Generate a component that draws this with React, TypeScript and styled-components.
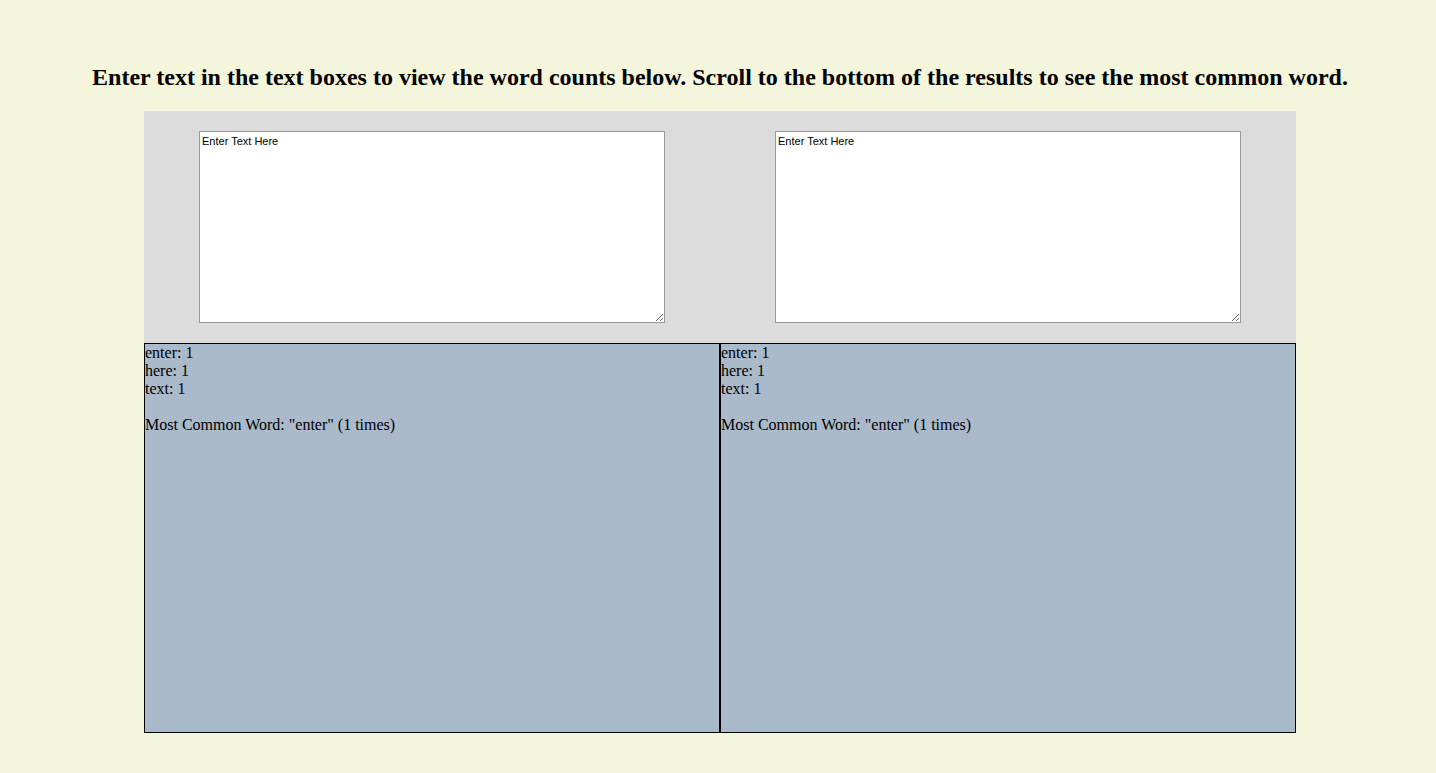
import React, { useState } from "react";
import styled, { createGlobalStyle } from "styled-components";

const Global = createGlobalStyle`
  html, body { margin: 0; padding: 0; background: #f5f5dc; }
  body { font-family: "Liberation Serif", "Times New Roman", serif; color: #000; }
`;

const Page = styled.div`
  padding-top: 63px;
  min-height: 773px;
  box-sizing: border-box;
`;

const Heading = styled.h2`
  margin: 0 0 20px 4px;
  text-align: center;
  font-size: 24px;
  font-weight: bold;
  line-height: 28px;
`;

const Panel = styled.div`
  width: 1152px;
  margin-left: 144px;
`;

const InputRow = styled.div`
  display: grid;
  grid-template-columns: 1fr 1fr;
  background: #dcdcdc;
  padding: 20px 0;
`;

const Cell = styled.div`
  display: flex;
  justify-content: center;
`;

const TextBox = styled.textarea`
  width: 466px;
  height: 192px;
  box-sizing: border-box;
  border: 1px solid #999;
  padding: 3px 2px 2px;
  margin: 0;
  font-family: "Liberation Sans", Arial, sans-serif;
  font-size: 11px;
  line-height: 13px;
  color: #000;
  background: #fff;
  outline: none;
  display: block;
`;

const ResultRow = styled.div`
  display: grid;
  grid-template-columns: 1fr 1fr;
`;

const ResultBox = styled.div`
  height: 390px;
  box-sizing: border-box;
  border: 1px solid #000;
  background: #aabacb;
  font-size: 16px;
  line-height: 18px;
`;

const Line = styled.div`
  min-height: 18px;
`;

function countWords(text: string) {
  const counts: Record<string, number> = {};
  text
    .toLowerCase()
    .split(/[^a-z0-9']+/)
    .filter(Boolean)
    .forEach((w) => {
      counts[w] = (counts[w] || 0) + 1;
    });
  return counts;
}

function Results({ text }: { text: string }) {
  const counts = countWords(text);
  const keys = Object.keys(counts).sort();
  let best = "";
  let bestN = 0;
  Object.keys(counts).forEach((k) => {
    if (counts[k] > bestN) {
      best = k;
      bestN = counts[k];
    }
  });
  return (
    <ResultBox>
      {keys.map((k) => (
        <Line key={k}>
          {k}: {counts[k]}
        </Line>
      ))}
      <Line />
      <Line>
        Most Common Word: "{best}" ({bestN} times)
      </Line>
    </ResultBox>
  );
}

export default function App() {
  const [a, setA] = useState("Enter Text Here");
  const [b, setB] = useState("Enter Text Here");
  return (
    <Page>
      <Global />
      <Heading>
        Enter text in the text boxes to view the word counts below. Scroll to the bottom of the
        results to see the most common word.
      </Heading>
      <Panel>
        <InputRow>
          <Cell>
            <TextBox value={a} onChange={(e) => setA(e.target.value)} />
          </Cell>
          <Cell>
            <TextBox value={b} onChange={(e) => setB(e.target.value)} />
          </Cell>
        </InputRow>
        <ResultRow>
          <Results text={a} />
          <Results text={b} />
        </ResultRow>
      </Panel>
    </Page>
  );
}
